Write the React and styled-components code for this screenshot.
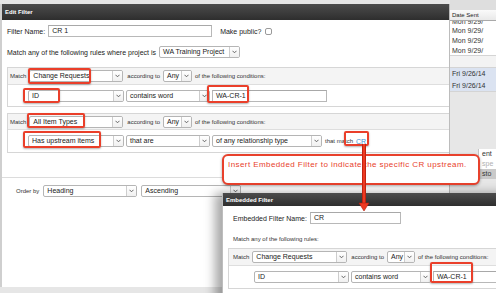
import React from "react";
import styled, { createGlobalStyle } from "styled-components";

const GlobalStyle = createGlobalStyle`
  *, *::before, *::after { box-sizing: border-box; }
  html, body { margin: 0; padding: 0; }
  body {
    font-family: "Liberation Sans", Arial, sans-serif;
    background: #e6e6e6;
    color: #222;
  }
`;

const Desktop = styled.div`
  position: relative;
  width: 496px;
  height: 293px;
  overflow: hidden;
  display: flex;
  align-items: flex-start;
  background: #e6e6e6;
`;

const Window = styled.div`
  display: flex;
  flex-direction: column;
  background: #fff;
`;

const EditWindow = styled(Window)`
  width: 450px;
  height: 283px;
  margin-top: 4px;
  flex-shrink: 0;
  border-left: 2px solid #cfcfcf;
  border-right: 1px solid #bcbcbc;
`;

const EmbeddedWindow = styled(Window)`
  position: absolute;
  left: 222px;
  top: 193px;
  width: 290px;
  height: 110px;
  border-left: 1px solid #bdbdbd;
  box-shadow: -7px 0 10px rgba(0, 0, 0, 0.35);
`;

const TitleBar = styled.div`
  height: ${(p) => p.$h}px;
  flex-shrink: 0;
  display: flex;
  align-items: center;
  padding-left: 3px;
  background: linear-gradient(#4c4c4c, #2e2e2e);
  color: #fff;
  font-size: 6px;
  font-weight: bold;
`;

const Body = styled.div`
  flex: 1;
  display: flex;
  flex-direction: column;
  padding: ${(p) => p.$pad};
`;

const Line = styled.div`
  display: flex;
  align-items: center;
  gap: ${(p) => p.$gap ?? 3}px;
  height: ${(p) => p.$h ?? 12}px;
  margin-top: ${(p) => p.$mt ?? 0}px;
  padding-left: ${(p) => p.$pl ?? 0}px;
  flex-shrink: 0;
`;

const Label = styled.span`
  font-size: 7px;
  color: #222;
  white-space: nowrap;
  margin-left: ${(p) => p.$ml ?? 0}px;
`;

const Small = styled.span`
  font-size: 6px;
  color: #333;
  white-space: nowrap;
  margin-left: ${(p) => p.$ml ?? 0}px;
`;

const Link = styled.span`
  font-size: 7px;
  color: #3d8fd0;
  margin-left: 1px;
`;

const TextInput = styled.div`
  width: ${(p) => p.$w}px;
  height: 12px;
  flex-shrink: 0;
  border: 1px solid #b8b8b8;
  border-top-color: #a8a8a8;
  background: #fff;
  font-size: 7px;
  line-height: 10px;
  padding-left: 3px;
  white-space: nowrap;
  overflow: hidden;
`;

const Checkbox = styled.span`
  width: 7px;
  height: 7px;
  border: 1px solid #9a9a9a;
  border-radius: 2px;
  background: #fff;
  margin-left: 1px;
`;

const SelectBox = styled.div`
  width: ${(p) => p.$w}px;
  height: 12px;
  flex-shrink: 0;
  display: flex;
  border: 1px solid #b5b5b5;
  border-radius: 2px;
  background: #fff;
  overflow: hidden;
`;

const SelectValue = styled.span`
  flex: 1;
  font-size: 7px;
  line-height: 10px;
  padding-left: 3px;
  white-space: nowrap;
  overflow: hidden;
`;

const SelectArrow = styled.span`
  width: 10px;
  flex-shrink: 0;
  display: flex;
  align-items: center;
  justify-content: center;
  border-left: 1px solid #cdcdcd;
  background: linear-gradient(#fff, #f0f0f0);
`;

const Select = ({ w, children }) => (
  <SelectBox $w={w}>
    <SelectValue>{children}</SelectValue>
    <SelectArrow>
      <svg width="5" height="4" viewBox="0 0 5 4">
        <polyline points="0.5,0.8 2.5,2.8 4.5,0.8" fill="none" stroke="#555" strokeWidth="0.9" />
      </svg>
    </SelectArrow>
  </SelectBox>
);

const RuleBlock = styled.div`
  display: flex;
  flex-direction: column;
  margin-top: ${(p) => p.$mt}px;
  border: 1px solid #d6d6d6;
  border-right: none;
  flex-shrink: 0;
`;

const RuleHeader = styled.div`
  height: ${(p) => p.$h}px;
  display: flex;
  align-items: center;
  gap: 3px;
  padding-left: ${(p) => p.$pl}px;
  background: #f4f4f4;
  border-bottom: 1px solid #dedede;
`;

const RuleRow = styled.div`
  height: ${(p) => p.$h}px;
  display: flex;
  align-items: center;
  gap: 2px;
  padding-left: ${(p) => p.$pl}px;
`;

const Divider = styled.div`
  height: 1px;
  margin: ${(p) => p.$mt}px 0 0 -5px;
  background: #dcdcdc;
`;

const SidePanel = styled.div`
  flex: 1;
  align-self: stretch;
  display: flex;
  flex-direction: column;
  background: #e7e7e7;
  overflow: hidden;
`;

const TopStrip = styled.div`
  height: 10px;
  background: #dedede;
`;

const HeaderCell = styled.div`
  height: 11px;
  padding-left: 2px;
  font-size: 6px;
  line-height: 10px;
  color: #222;
  background: linear-gradient(#fafafa, #e9e9e9);
  border-bottom: 1px solid #a9a9a9;
`;

const CutRow = styled.div`
  height: 5px;
  overflow: hidden;
  background: #fff;
  font-size: 7px;
  line-height: 2px;
  padding-left: 2px;
  color: #333;
`;

const ListRow = styled.div`
  height: ${(p) => p.$h ?? 10}px;
  padding-left: 2px;
  font-size: 7px;
  line-height: ${(p) => p.$h ?? 10}px;
  white-space: nowrap;
  color: #333;
  background: ${(p) => p.$bg ?? "#fff"};
  border-bottom: ${(p) => (p.$line ? "1px solid #d4d4d4" : "none")};
`;

const Popover = styled.div`
  margin: 57px 0 0 28px;
  display: flex;
  flex-direction: column;
  background: #fff;
  border-left: 1px solid #c4c4c4;
`;

const PopRow = styled.div`
  height: 10px;
  padding-left: 3px;
  font-size: 7px;
  line-height: 10px;
  white-space: nowrap;
  color: ${(p) => (p.$muted ? "#b0b0b0" : "#333")};
  background: ${(p) => p.$bg ?? "#fff"};
`;

const Callout = styled.div`
  position: absolute;
  left: 222px;
  top: 154px;
  width: 258px;
  height: 31px;
  padding: 4px 0 0 4px;
  border: 2px solid #e8412c;
  border-radius: 6px;
  background: #fff;
  box-shadow: 0 1px 3px rgba(0, 0, 0, 0.35);
  color: #e8412c;
  font-size: 8px;
  letter-spacing: 0.42px;
  white-space: nowrap;
`;

const Mark = styled.div`
  position: absolute;
  border: 2px solid #ea3f2a;
  border-radius: 2px;
  box-shadow: 0 1px 2px rgba(0, 0, 0, 0.3);
  pointer-events: none;
`;

const Arrow = styled.svg`
  position: absolute;
  left: 358px;
  top: 144px;
  overflow: visible;
`;

const marks = [
  [28, 68, 63, 16],
  [23, 88, 37, 15],
  [207, 85, 42, 18],
  [27, 113, 58, 15],
  [23, 131, 78, 17],
  [344, 131, 25, 15],
  [430, 262, 43, 21],
];

export default function App() {
  return (
    <>
      <GlobalStyle />
      <Desktop>
        <EditWindow>
          <TitleBar $h={16}>Edit Filter</TitleBar>
          <Body $pad="5px 0 0 5px">
            <Line>
              <Label>Filter Name:</Label>
              <TextInput $w={164}>CR 1</TextInput>
              <Label $ml={5}>Make public?</Label>
              <Checkbox />
            </Line>
            <Line $mt={9}>
              <Label>Match any of the following rules where project is</Label>
              <Select w={81}>WA Training Project</Select>
            </Line>

            <RuleBlock $mt={9}>
              <RuleHeader $h={17} $pl={2}>
                <Small>Match</Small>
                <Select w={94}>Change Requests</Select>
                <Small $ml={1}>according to</Small>
                <Select w={29}>Any</Select>
                <Small>of the following conditions:</Small>
              </RuleHeader>
              <RuleRow $h={21} $pl={20}>
                <Select w={96}>ID</Select>
                <Select w={84}>contains word</Select>
                <TextInput $w={115}>WA-CR-1</TextInput>
              </RuleRow>
            </RuleBlock>

            <RuleBlock $mt={6}>
              <RuleHeader $h={16} $pl={2}>
                <Small>Match</Small>
                <Select w={94}>All Item Types</Select>
                <Small $ml={1}>according to</Small>
                <Select w={29}>Any</Select>
                <Small>of the following conditions:</Small>
              </RuleHeader>
              <RuleRow $h={22} $pl={20}>
                <Select w={96}>Has upstream items</Select>
                <Select w={84}>that are</Select>
                <Select w={110}>of any relationship type</Select>
                <Small $ml={1}>that match</Small>
                <Link>CR</Link>
              </RuleRow>
            </RuleBlock>

            <Divider $mt={24} />
            <Line $mt={7} $pl={9} $gap={4}>
              <Small>Order by</Small>
              <Select w={94}>Heading</Select>
              <Select w={100}>Ascending</Select>
            </Line>
          </Body>
        </EditWindow>

        <SidePanel>
          <TopStrip />
          <HeaderCell>Date Sent</HeaderCell>
          <CutRow>Mon 9/29/</CutRow>
          <ListRow>Mon 9/29/</ListRow>
          <ListRow>Mon 9/29/</ListRow>
          <ListRow $line>Mon 9/29/</ListRow>
          <ListRow $h={12} $bg="#f3f3f3" $line />
          <ListRow $h={12} $bg="#dbe3f1">Fri 9/26/14</ListRow>
          <ListRow $h={12} $bg="#dbe3f1" $line>Fri 9/26/14</ListRow>
          <Popover>
            <PopRow>ent</PopRow>
            <PopRow $muted>spe</PopRow>
            <PopRow $bg="#c9c9c9">sto</PopRow>
          </Popover>
        </SidePanel>

        <Callout>Insert Embedded Filter to indicate the specific CR upstream.</Callout>

        <EmbeddedWindow>
          <TitleBar $h={13}>Embedded Filter</TitleBar>
          <Body $pad="6px 0 0 5px">
            <Line $pl={5}>
              <Label>Embedded Filter Name:</Label>
              <TextInput $w={91}>CR</TextInput>
            </Line>
            <Line $mt={11} $h={8} $pl={5}>
              <Small>Match any of the following rules:</Small>
            </Line>
            <RuleBlock $mt={5}>
              <RuleHeader $h={17} $pl={4}>
                <Small>Match</Small>
                <Select w={95}>Change Requests</Select>
                <Small $ml={1}>according to</Small>
                <Select w={28}>Any</Select>
                <Small>of the following conditions:</Small>
              </RuleHeader>
              <RuleRow $h={22} $pl={25}>
                <Select w={95}>ID</Select>
                <Select w={80}>contains word</Select>
                <TextInput $w={80}>WA-CR-1</TextInput>
              </RuleRow>
            </RuleBlock>
          </Body>
        </EmbeddedWindow>

        {marks.map(([x, y, w, h], i) => (
          <Mark key={i} style={{ left: x, top: y, width: w, height: h }} />
        ))}

        <Arrow width="12" height="68" viewBox="0 0 12 68">
          <line x1="6" y1="0" x2="6" y2="61" stroke="#b3200f" strokeWidth="4" />
          <line x1="6" y1="0" x2="6" y2="61" stroke="#ee3a22" strokeWidth="2.4" />
          <polygon points="1,59 11,59 6,67" fill="#ee3a22" stroke="#b3200f" strokeWidth="0.6" />
        </Arrow>
      </Desktop>
    </>
  );
}
